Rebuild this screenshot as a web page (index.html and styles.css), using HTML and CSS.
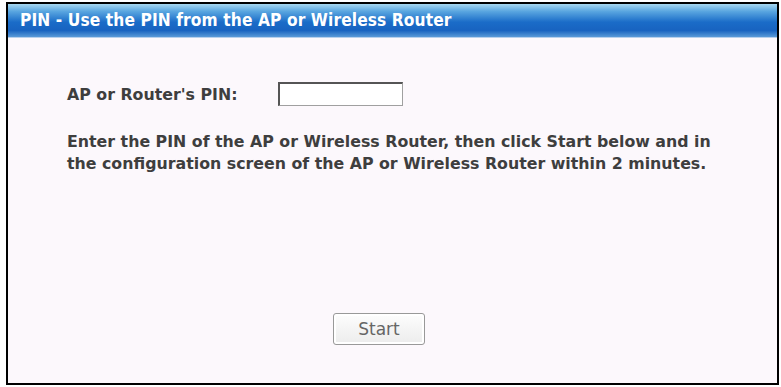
FILE: index.html
```html
<!DOCTYPE html>
<html>
<head>
<meta charset="utf-8">
<link rel="stylesheet" href="styles.css">
</head>
<body>
<div class="frame">
  <div class="titlebar">PIN - Use the PIN from the AP or Wireless Router</div>
  <div class="content">
    <div class="pin-row">
      <span class="pin-label">AP or Router's PIN:</span>
      <input class="pin-input" type="text">
    </div>
    <p class="desc">Enter the PIN of the AP or Wireless Router, then click Start below and in<br>the configuration screen of the AP or Wireless Router within 2 minutes.</p>
    <div class="actions">
      <button class="start-btn">Start</button>
    </div>
  </div>
</div>
</body>
</html>
```

FILE: styles.css
```css
html, body {
  margin: 0;
  padding: 0;
  background: #ffffff;
}
.frame {
  margin: 2px 0 0 6px;
  width: 769px;
  height: 379px;
  border: 2px solid #000;
  background: #fcf8fc;
  display: flex;
  flex-direction: column;
}
.titlebar {
  height: 34px;
  box-sizing: border-box;
  padding: 6px 0 0 12px;
  color: #fff;
  font-family: "DejaVu Sans Condensed", "DejaVu Sans", sans-serif;
  font-weight: bold;
  font-size: 17.2px;
  letter-spacing: 0.1px;
  background: linear-gradient(to bottom, #a8d8f0 0%, #5aa6e0 22%, #1a6cc8 55%, #1863c0 80%, #5a9ad8 100%);
  border-bottom: 1px solid #b8d0ec;
}
.content {
  flex: 1;
  display: flex;
  flex-direction: column;
  padding: 0 0 0 59px;
  font-family: "DejaVu Sans", sans-serif;
  font-weight: bold;
  font-size: 15.8px;
  color: #3e3e3e;
}
.pin-row {
  display: flex;
  align-items: center;
  margin-top: 44px;
}
.pin-label {
  width: 211px;
}
.pin-input {
  width: 125px;
  height: 24px;
  box-sizing: border-box;
  border: 1px solid #a0a0a0;
  border-top: 2px solid #555;
  border-left: 2px solid #555;
  background: #fff;
  margin: 0;
  padding: 0;
}
.desc {
  margin: 25px 0 0 0;
  line-height: 22px;
}
.actions {
  margin-top: auto;
  margin-bottom: 38px;
  display: flex;
  padding-left: 266px;
}
.start-btn {
  width: 92px;
  height: 32px;
  border: 1px solid #999;
  border-radius: 3px;
  background: linear-gradient(to bottom, #fdfdfd, #ececec);
  font-family: "DejaVu Sans", sans-serif;
  font-size: 17px;
  color: #666;
  box-shadow: inset 0 0 0 2px #fff;
}
```
